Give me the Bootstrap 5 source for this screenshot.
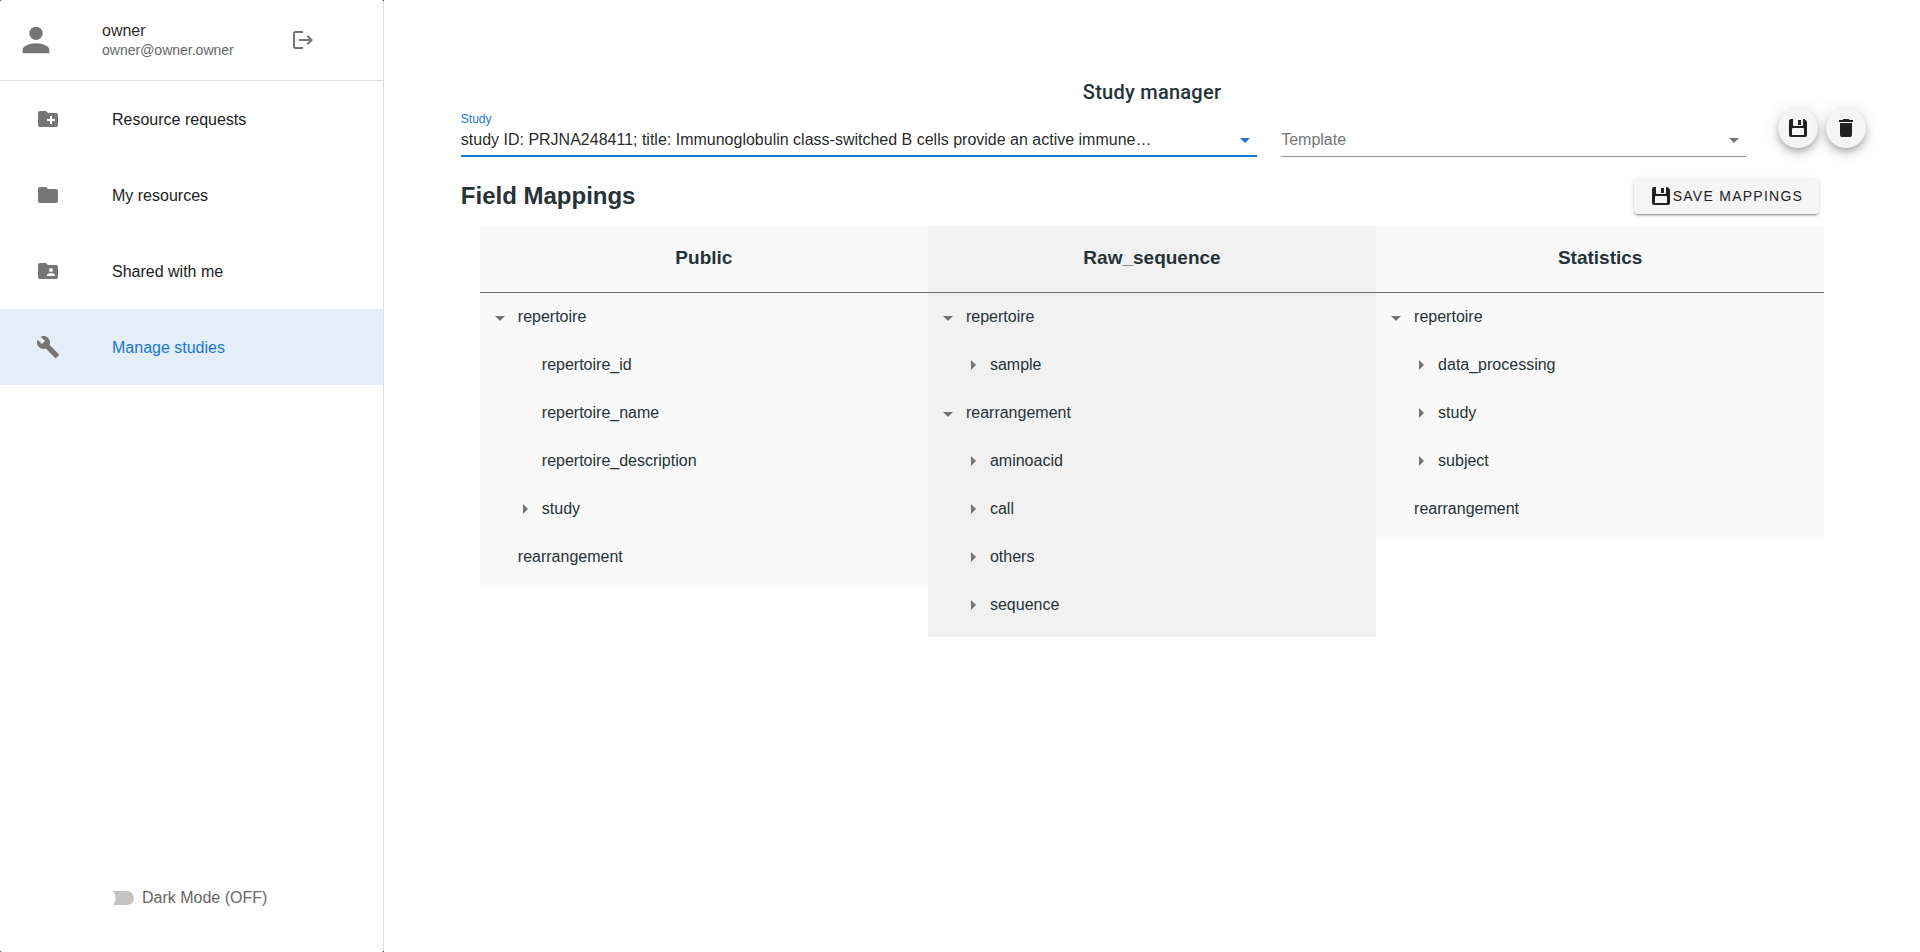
<!DOCTYPE html>
<html lang="en">
<head>
<meta charset="utf-8">
<meta name="viewport" content="width=device-width, initial-scale=1">
<title>Study manager</title>
<link href="https://cdn.jsdelivr.net/npm/bootstrap@5.3.0/dist/css/bootstrap.min.css" rel="stylesheet">
<style>
  body { font-family: "Liberation Sans", Arial, sans-serif; color: #263238; background: #fff; }
  .mdi { width: 24px; height: 24px; fill: #757575; flex: none; }

  /* sidebar */
  .side-wrap { width: 20%; background: #111; top: 0; }
  .side { background: #fff; border-right: 1px solid #dcdcdc; border-radius: 2px; color: rgba(0,0,0,.87); }
  .side-user { height: 81px; border-bottom: 1px solid #dcdcdc; padding-left: 16px; }
  .side-user .mdi-account { width: 40px; height: 40px; }
  .user-text { margin-left: 46px; width: 181px; line-height: 20px; }
  .user-mail { font-size: 14px; line-height: 18px; color: #666; }
  .side-link { height: 76px; padding-left: 36px; gap: 52px; color: #212121; }
  .side-link span { padding-top: 2px; }
  .side-link.active { background: #e4eef9; color: #1976d2; }
  .dark-toggle { padding: 0 0 42px 112px; color: #666; }
  .dark-toggle input { appearance: none; width: 22px; height: 14px; margin: 0 8px 0 0; border: 0; border-radius: 0 7px 7px 0;
    background: radial-gradient(circle at -7px 7px, transparent 10px, #c3c3c3 11px); }

  /* main area */
  .workspace { padding: 77px 4vw 24px; min-width: 0; }
  .page-title { font: 500 20px/30px Roboto, sans-serif; letter-spacing: .0125em; margin: 0; }
  .field-label { font-size: 12px; line-height: 16px; color: #1976d2; }
  .line-select { appearance: none; height: 30px; width: 100%; border: 0; border-radius: 0; outline: 0; padding: 0 24px 4px 0;
    line-height: 24px; color: rgba(0,0,0,.87); background-color: transparent; background-repeat: no-repeat; background-position: right top;
    box-shadow: inset 0 -1px #949494;
    background-image: url("data:image/svg+xml,%3Csvg xmlns='http://www.w3.org/2000/svg' width='24' height='24'%3E%3Cpath fill='%23757575' d='M7 11l5 5 5-5z'/%3E%3C/svg%3E"); }
  .line-select.chosen { box-shadow: inset 0 -2px #1976d2;
    background-image: url("data:image/svg+xml,%3Csvg xmlns='http://www.w3.org/2000/svg' width='24' height='24'%3E%3Cpath fill='%231976d2' d='M7 11l5 5 5-5z'/%3E%3C/svg%3E"); }
  .line-select.blank { color: #757575; }
  .fab-col { padding: 1px 0 0 20px; margin-right: -11px; gap: 8px; }
  .fab { width: 40px; height: 40px; border: 0; border-radius: 50%; background: #f5f5f5; padding: 8px;
    box-shadow: 0 3px 5px -1px rgba(0,0,0,.2), 0 6px 10px rgba(0,0,0,.14), 0 1px 18px rgba(0,0,0,.12); }
  .fab .mdi, .save-btn svg { fill: #212121; }
  .section-head { height: 48px; margin: 15px 24px 6px 0; }
  .section-head h2 { font-size: 24px; font-weight: 700; margin: 0; }
  .save-btn { height: 36px; border: 0; border-radius: 4px; background: #f5f5f5; color: #212121; padding: 0 16px 0 18px; gap: 3px;
    font-size: 14px; letter-spacing: .09em;
    box-shadow: 0 3px 1px -2px rgba(0,0,0,.2), 0 2px 2px rgba(0,0,0,.14), 0 1px 5px rgba(0,0,0,.12); }

  /* mapping columns */
  .mapping { margin: 0 19px; }
  .map-col { background: #f9f9f9; padding-bottom: 8px; }
  .map-col.alt { background: #f1f1f1; }
  .map-col h3 { height: 67px; padding-top: 20px; margin: 0; border-bottom: 1px solid #6e6e6e; text-align: center;
    font-size: 19px; line-height: 24px; font-weight: 700; }
  .tree, .tree ul { list-style: none; margin: 0; padding: 0; }
  .tree { padding-left: 8px; }
  .tree ul { padding-left: 24px; }
  .node { height: 48px; display: flex; align-items: center; gap: 6px; }
  .node.leaf { padding-left: 30px; }
  .caret { border: 0; background: none; padding: 0; width: 24px; height: 24px; display: flex; }
  .shut svg { transform: rotate(-90deg); }
</style>
<script src="https://cdn.jsdelivr.net/npm/bootstrap@5.3.0/dist/js/bootstrap.bundle.min.js"></script>
</head>
<body>
<svg class="d-none" aria-hidden="true">
  <symbol id="floppy" viewBox="3 3 18 18"><path d="M5 3a2 2 0 0 0-2 2v14a2 2 0 0 0 2 2h14a2 2 0 0 0 2-2V5.500L18.500 3H17v6a1 1 0 0 1-1 1H8a1 1 0 0 1-1-1V3H5m7 1v5h3V4h-3m-5 8h10a1 1 0 0 1 1 1v6H6v-6a1 1 0 0 1 1-1z"/></symbol>
  <symbol id="menu-down" viewBox="0 0 24 24"><path d="M7 11l5 5 5-5H7z"/></symbol>
</svg>
<div class="d-flex align-items-start">
  <div class="side-wrap vh-100 sticky-top flex-shrink-0">
    <aside class="side h-100 d-flex flex-column">
      <div class="side-user d-flex align-items-center">
        <svg class="mdi mdi-account" viewBox="0 0 24 24"><path d="M12 4a4 4 0 1 1 0 8 4 4 0 0 1 0-8m0 10c4.420 0 8 1.790 8 4v2H4v-2c0-2.210 3.580-4 8-4z"/></svg>
        <div class="user-text">
          <div>owner</div>
          <div class="user-mail">owner@owner.owner</div>
        </div>
        <button type="button" class="btn border-0 p-0 ms-2 d-flex" aria-label="Log out">
          <svg class="mdi" viewBox="0 0 24 24"><path d="M17 7l-1.410 1.410L18.170 11H8v2h10.170l-2.580 2.580L17 17l5-5M4 5h8V3H4c-1.100 0-2 .9-2 2v14c0 1.100.9 2 2 2h8v-2H4V5z"/></svg>
        </button>
      </div>
      <nav class="nav flex-column">
        <a href="#requests" class="side-link d-flex align-items-center text-decoration-none">
          <svg class="mdi" viewBox="0 0 24 24"><path d="M20 6h-8l-2-2H4a2 2 0 0 0-2 2v12a2 2 0 0 0 2 2h16a2 2 0 0 0 2-2V8a2 2 0 0 0-2-2m-1 8h-3v3h-2v-3h-3v-2h3V9h2v3h3v2z"/></svg><span>Resource requests</span></a>
        <a href="#mine" class="side-link d-flex align-items-center text-decoration-none">
          <svg class="mdi" viewBox="0 0 24 24"><path d="M10 4H4a2 2 0 0 0-2 2v12a2 2 0 0 0 2 2h16a2 2 0 0 0 2-2V8a2 2 0 0 0-2-2h-8l-2-2z"/></svg><span>My resources</span></a>
        <a href="#shared" class="side-link d-flex align-items-center text-decoration-none">
          <svg class="mdi" viewBox="0 0 24 24"><path d="M20 6h-8l-2-2H4a2 2 0 0 0-2 2v12a2 2 0 0 0 2 2h16a2 2 0 0 0 2-2V8a2 2 0 0 0-2-2m-5 3a2 2 0 1 1 0 4 2 2 0 0 1 0-4m4 8h-8v-1c0-1.330 2.670-2 4-2s4 .67 4 2v1z"/></svg><span>Shared with me</span></a>
        <a href="#studies" class="side-link active d-flex align-items-center text-decoration-none" aria-current="page">
          <svg class="mdi" viewBox="0 0 24 24"><path d="M22.700 19l-9.100-9.100c.9-2.300.4-5-1.500-6.900-2-2-5-2.400-7.400-1.300L9 6 6 9 1.600 4.700C.4 7.100.9 10.100 2.900 12.100c1.900 1.900 4.600 2.400 6.900 1.500l9.100 9.100c.4.4 1 .4 1.400 0l2.300-2.300c.5-.4.5-1.100.1-1.400z"/></svg><span>Manage studies</span></a>
      </nav>
      <div class="dark-toggle mt-auto d-flex align-items-center">
        <input type="checkbox" role="switch" id="dark"><label for="dark">Dark Mode (OFF)</label>
      </div>
    </aside>
  </div>

  <main class="workspace flex-grow-1">
    <h1 class="page-title text-center">Study manager</h1>
    <div class="row gx-4">
      <div class="col-7 pt-1">
        <label class="field-label d-block" for="study">Study</label>
        <select id="study" class="line-select chosen d-block">
          <option>study ID: PRJNA248411; title: Immunoglobulin class-switched B cells provide an active immune…</option>
        </select>
      </div>
      <div class="col d-flex align-items-end">
        <label class="visually-hidden" for="template">Template</label>
        <select id="template" class="line-select blank d-block"><option>Template</option></select>
      </div>
      <div class="col-auto fab-col d-flex align-items-start">
        <button type="button" class="fab d-flex align-items-center justify-content-center" aria-label="Save study"><svg class="mdi" viewBox="0 0 24 24"><use href="#floppy" x="3" y="3" width="18" height="18"/></svg></button>
        <button type="button" class="fab d-flex align-items-center justify-content-center" aria-label="Delete study"><svg class="mdi" viewBox="0 0 24 24"><path d="M19 4h-3.500l-1-1h-5l-1 1H5v2h14M6 19a2 2 0 0 0 2 2h8a2 2 0 0 0 2-2V7H6v12z"/></svg></button>
      </div>
    </div>

    <div class="section-head d-flex align-items-center justify-content-between">
      <h2>Field Mappings</h2>
      <button type="button" class="save-btn d-flex align-items-center"><svg width="18" height="18"><use href="#floppy"/></svg>SAVE MAPPINGS</button>
    </div>

    <div class="mapping row gx-0 align-items-start">
      <section class="col map-col">
        <h3>Public</h3>
        <ul class="tree">
          <li><div class="node"><button class="caret" aria-label="Collapse"><svg class="mdi"><use href="#menu-down"/></svg></button>repertoire</div>
            <ul>
              <li class="node leaf">repertoire_id</li>
              <li class="node leaf">repertoire_name</li>
              <li class="node leaf">repertoire_description</li>
              <li class="node"><button class="caret shut" aria-label="Expand"><svg class="mdi"><use href="#menu-down"/></svg></button>study</li>
            </ul></li>
          <li class="node leaf">rearrangement</li>
        </ul>
      </section>
      <section class="col map-col alt">
        <h3>Raw_sequence</h3>
        <ul class="tree">
          <li><div class="node"><button class="caret" aria-label="Collapse"><svg class="mdi"><use href="#menu-down"/></svg></button>repertoire</div>
            <ul>
              <li class="node"><button class="caret shut" aria-label="Expand"><svg class="mdi"><use href="#menu-down"/></svg></button>sample</li>
            </ul></li>
          <li><div class="node"><button class="caret" aria-label="Collapse"><svg class="mdi"><use href="#menu-down"/></svg></button>rearrangement</div>
            <ul>
              <li class="node"><button class="caret shut" aria-label="Expand"><svg class="mdi"><use href="#menu-down"/></svg></button>aminoacid</li>
              <li class="node"><button class="caret shut" aria-label="Expand"><svg class="mdi"><use href="#menu-down"/></svg></button>call</li>
              <li class="node"><button class="caret shut" aria-label="Expand"><svg class="mdi"><use href="#menu-down"/></svg></button>others</li>
              <li class="node"><button class="caret shut" aria-label="Expand"><svg class="mdi"><use href="#menu-down"/></svg></button>sequence</li>
            </ul></li>
        </ul>
      </section>
      <section class="col map-col">
        <h3>Statistics</h3>
        <ul class="tree">
          <li><div class="node"><button class="caret" aria-label="Collapse"><svg class="mdi"><use href="#menu-down"/></svg></button>repertoire</div>
            <ul>
              <li class="node"><button class="caret shut" aria-label="Expand"><svg class="mdi"><use href="#menu-down"/></svg></button>data_processing</li>
              <li class="node"><button class="caret shut" aria-label="Expand"><svg class="mdi"><use href="#menu-down"/></svg></button>study</li>
              <li class="node"><button class="caret shut" aria-label="Expand"><svg class="mdi"><use href="#menu-down"/></svg></button>subject</li>
            </ul></li>
          <li class="node leaf">rearrangement</li>
        </ul>
      </section>
    </div>
  </main>
</div>
</body>
</html>
